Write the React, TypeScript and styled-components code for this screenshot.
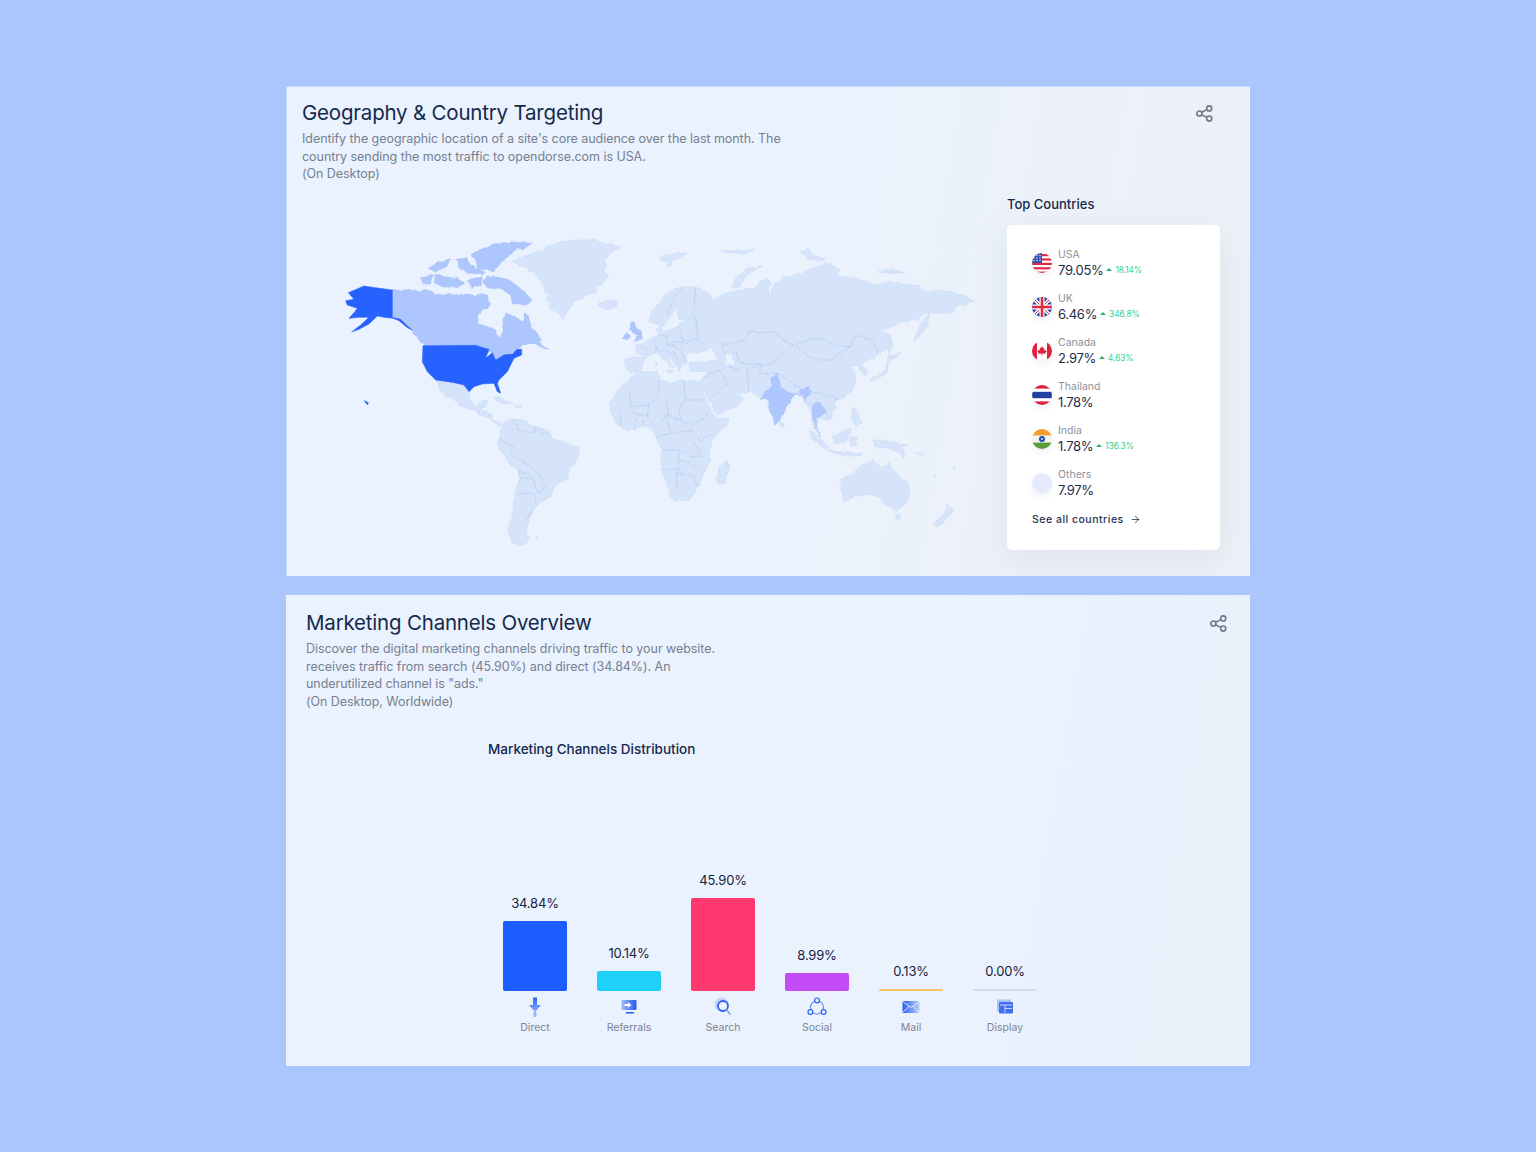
import React from "react";
import styled, { createGlobalStyle } from "styled-components";
import { ArrowRight } from "lucide-react";

const GlobalStyle = createGlobalStyle`
  html, body {
    margin: 0;
    padding: 0;
    background: #abc5fd;
  }
  body {
    font-family: "Inter", "Liberation Sans", sans-serif;
    color: #15294b;
  }
`;

const Page = styled.div`
  width: 964px;
  height: 1152px;
  margin: 0 auto;
  padding-top: 86px;
  box-sizing: border-box;
  display: flex;
  flex-direction: column;
  gap: 19px;
`;

const Card = styled.section<{ $height: number; $edge?: boolean }>`
  height: ${({ $height }) => $height}px;
  box-sizing: border-box;
  background: ${({ $edge }) =>
    $edge
      ? "linear-gradient(100deg, #e9f2fe 0%, #eaf2fe 50%, #edf1f7 85%)"
      : "linear-gradient(100deg, #e9f2fe 0%, #eaf2fe 60%, #ebf1fb 100%)"};
  box-shadow: ${({ $edge }) => ($edge ? "inset 1px 1px 0 #c6d8fe" : "none")};
  overflow: hidden;
`;

const CardHeader = styled.header<{ $left: number; $right: number; $top: number }>`
  display: flex;
  justify-content: space-between;
  align-items: flex-start;
  padding: ${({ $top }) => $top}px ${({ $right }) => $right}px 0 ${({ $left }) => $left}px;
`;

const Title = styled.h2`
  margin: 0 0 3px;
  font-size: 20.5px;
  line-height: 28px;
  font-weight: 400;
  letter-spacing: -0.2px;
  color: #15294b;
`;

const Description = styled.p`
  margin: 0;
  font-size: 12.5px;
  line-height: 17.6px;
  font-weight: 400;
  letter-spacing: -0.05px;
  color: #77808f;
`;

const ShareButton = styled.svg`
  display: block;
  margin: 6px 1px 0 0;
  fill: none;
  stroke: #6d7a8e;
  stroke-width: 1.7;
`;

const GeoBody = styled.div`
  display: flex;
  justify-content: space-between;
  align-items: flex-start;
  padding: 12px 30px 0 33px;
`;

const MapSvg = styled.svg`
  display: block;
  margin-top: 35px;
  flex: none;
`;

const Land = styled.path<{ $tone?: "base" | "mid" | "top" }>`
  fill: ${({ $tone }) =>
    $tone === "top" ? "#2762ff" : $tone === "mid" ? "#adc6fd" : "#d6e4fb"};
  stroke: ${({ $tone }) =>
    $tone === "top" ? "#2762ff" : $tone === "mid" ? "#a4bdf5" : "#c9d9f3"};
  stroke-width: 1.6;
  stroke-linejoin: round;
`;

const Border = styled.path`
  fill: none;
  stroke: #b4c6e6;
  stroke-width: 1.8;
  stroke-linejoin: round;
`;

const Water = styled.path`
  fill: #eaf2fe;
`;

const CountriesColumn = styled.aside`
  width: 213px;
  flex: none;
`;

const ColumnTitle = styled.h3`
  margin: 0 0 12px;
  font-size: 13px;
  line-height: 18px;
  font-weight: 500;
  color: #15294b;
`;

const CountriesCard = styled.div`
  height: 325px;
  box-sizing: border-box;
  padding: 16px 25px 0;
  background: #fff;
  border-radius: 5px;
  box-shadow: 0 10px 34px rgba(110, 130, 170, 0.12);
`;

const CountryRow = styled.div`
  display: flex;
  align-items: center;
  gap: 6px;
  height: 44px;
`;

const FlagSvg = styled.svg`
  flex: none;
  display: block;
  filter: drop-shadow(0 3px 3px rgba(120, 140, 180, 0.14));
`;

const CountryName = styled.div`
  font-size: 10.5px;
  line-height: 14px;
  color: #8b92a0;
`;

const CountryValue = styled.div`
  display: flex;
  align-items: center;
  font-size: 13px;
  line-height: 16px;
  letter-spacing: -0.3px;
  color: #1d2c47;
`;

const Delta = styled.span`
  display: flex;
  align-items: center;
  gap: 3px;
  margin-left: 3px;
  font-size: 8.4px;
  letter-spacing: -0.1px;
  color: #36d08f;
  &::before {
    content: "";
    border-left: 3px solid transparent;
    border-right: 3px solid transparent;
    border-bottom: 3px solid #27b377;
  }
`;

const SeeAll = styled.a`
  display: flex;
  align-items: center;
  gap: 6px;
  margin-top: 7px;
  font-size: 10.5px;
  line-height: 16px;
  font-weight: 500;
  letter-spacing: 0.5px;
  color: #1f3252;
`;

const ChartSection = styled.div`
  padding: 30px 0 0 202px;
`;

const ChartTitle = styled.h3`
  margin: 0;
  font-size: 13.5px;
  line-height: 18px;
  font-weight: 500;
  color: #15294b;
`;

const Chart = styled.div`
  display: flex;
  align-items: flex-end;
  height: 277px;
`;

const Column = styled.div`
  width: 94px;
  display: flex;
  flex-direction: column;
  align-items: center;
`;

const Value = styled.div`
  margin-bottom: 10px;
  font-size: 13px;
  line-height: 16px;
  letter-spacing: -0.2px;
  color: #17233c;
`;

const Bar = styled.div<{ $color: string }>`
  width: 64px;
  border-radius: 2px;
  background: ${({ $color }) => $color};
`;

const IconBox = styled.div`
  display: flex;
  align-items: center;
  justify-content: center;
  width: 20px;
  height: 20px;
  margin-top: 6px;
`;

const Label = styled.div`
  margin-top: 4px;
  font-size: 10.5px;
  line-height: 14px;
  color: #7d8594;
`;

const ShareIcon = () => (
  <ShareButton width="17" height="17" viewBox="0 0 18 18">
    <circle cx="3.6" cy="9" r="2.7" />
    <circle cx="14" cy="3.6" r="2.7" />
    <circle cx="14" cy="14.4" r="2.7" />
    <path d="M6 7.7 11.6 4.9M6 10.3 11.6 13.1" />
  </ShareButton>
);

const Flag = ({ id, children }: { id: string; children: React.ReactNode }) => (
  <FlagSvg width="20" height="20" viewBox="0 0 20 20">
    <defs>
      <clipPath id={`clip-${id}`}>
        <circle cx="10" cy="10" r="10" />
      </clipPath>
    </defs>
    <g clipPath={`url(#clip-${id})`}>{children}</g>
  </FlagSvg>
);

const flags: Record<string, React.ReactNode> = {
  usa: (
    <Flag id="usa">
      <rect width="20" height="20" fill="#fff" />
      {[0, 4.4, 8.8, 13.2, 17.6].map((y) => (
        <rect key={y} y={y + 1} width="20" height="2.2" fill="#dd2c42" />
      ))}
      <rect width="10" height="10" fill="#2d4fb0" />
      {[2, 5, 8].map((x) => (
        <g key={x} fill="#fff">
          <circle cx={x} cy="2.5" r=".7" />
          <circle cx={x} cy="5" r=".7" />
          <circle cx={x} cy="7.5" r=".7" />
        </g>
      ))}
    </Flag>
  ),
  uk: (
    <Flag id="uk">
      <rect width="20" height="20" fill="#2c4aa8" />
      <path d="M0 0 20 20M20 0 0 20" stroke="#fff" strokeWidth="3.4" />
      <path d="M0 0 20 20M20 0 0 20" stroke="#dd2c42" strokeWidth="1" />
      <path d="M10 0V20M0 10H20" stroke="#fff" strokeWidth="5" />
      <path d="M10 0V20M0 10H20" stroke="#dd2c42" strokeWidth="2.6" />
    </Flag>
  ),
  canada: (
    <Flag id="canada">
      <rect width="20" height="20" fill="#fff" />
      <rect width="5" height="20" fill="#dd2240" />
      <rect x="15" width="5" height="20" fill="#dd2240" />
      <path
        d="M10 5 11 7 12.3 6.5 11.8 9.3 13.3 8.6 13.8 10 15 10.2 13.4 11.8 13.7 12.8 10.4 12.5V14.5H9.6V12.5L6.3 12.8 6.6 11.8 5 10.2 6.2 10 6.7 8.6 8.2 9.3 7.7 6.5 9 7Z"
        fill="#dd2240"
      />
    </Flag>
  ),
  thailand: (
    <Flag id="thailand">
      <rect width="20" height="20" fill="#fff" />
      <rect width="20" height="3.6" fill="#d92240" />
      <rect y="16.4" width="20" height="3.6" fill="#d92240" />
      <rect y="6.8" width="20" height="6.4" fill="#23409f" />
    </Flag>
  ),
  india: (
    <Flag id="india">
      <rect width="20" height="20" fill="#f4f4f0" />
      <rect width="20" height="6.4" fill="#f59a2c" />
      <rect y="13.6" width="20" height="6.4" fill="#5d9c3d" />
      <circle cx="10" cy="10" r="3" fill="#1f4fa8" />
      <circle cx="10" cy="10" r="1" fill="#d6e4fb" />
    </Flag>
  ),
  others: (
    <Flag id="others">
      <rect width="20" height="20" fill="#e5ebfd" />
    </Flag>
  ),
};

const countries = [
  { key: "usa", name: "USA", value: "79.05%", delta: "18.14%" },
  { key: "uk", name: "UK", value: "6.46%", delta: "346.8%" },
  { key: "canada", name: "Canada", value: "2.97%", delta: "4.63%" },
  { key: "thailand", name: "Thailand", value: "1.78%" },
  { key: "india", name: "India", value: "1.78%", delta: "136.3%" },
  { key: "others", name: "Others", value: "7.97%" },
];

// outlines traced in 3x coordinates, one group per side of the map
const americasBase = [
  "M580,92 610,82 640,70 670,62 700,45 750,30 800,30 830,28 850,42 880,42 905,52 885,62 870,75 858,90 862,110 852,118 870,140 850,150 850,165 828,170 830,185 805,195 790,205 770,212 760,225 745,240 735,265 718,252 710,245 695,238 690,225 682,205 695,195 682,190 672,172 670,160 655,140 640,125 620,112 600,110Z",
  "M838,218 860,212 890,212 895,225 870,238 848,232Z",
  "M350,450 385,455 405,458 435,465 450,485 455,515 470,530 490,512 505,512 495,530 482,545 505,545 525,570 550,585 540,590 510,565 470,545 420,525 385,495 360,465Z",
  "M352,452 362,470 385,502 378,500 358,472Z",
  "M520,503 545,505 580,522 555,518 530,510Z",
  "M590,525 612,528 605,535 590,532Z",
  "M550,585 565,570 580,565 600,568 620,570 635,585 650,590 670,595 690,600 700,625 735,635 780,655 775,690 752,715 750,745 725,755 710,765 695,800 670,815 650,830 640,850 630,875 622,900 628,925 620,945 600,950 580,935 570,905 572,880 582,840 590,790 598,745 600,720 578,705 560,680 540,655 535,640 545,615Z",
  "M650,922 660,922 656,928Z",
];

const americasMid = [
  "M210,182 255,180 290,178 300,185 320,178 345,190 370,195 395,190 420,197 445,192 470,197 478,190 505,195 512,225 505,235 490,240 470,262 480,282 505,290 530,298 540,325 552,310 552,285 560,250 590,262 610,276 620,250 630,268 640,298 668,325 660,338 688,358 660,352 640,340 610,345 595,358 575,370 555,380 530,388 520,368 500,365 470,355 320,355 290,318 280,300 262,285 245,268 210,255Z",
  "M458,72 495,55 520,42 580,36 640,40 615,55 590,58 575,75 560,85 540,105 525,128 505,118 480,115 470,95Z",
  "M492,152 505,142 540,140 570,150 600,172 640,210 620,225 600,218 580,218 575,195 545,175 505,175Z",
  "M345,132 375,140 415,145 440,160 410,172 370,170 350,160Z",
  "M305,140 340,135 335,165 310,160Z",
  "M325,118 360,95 392,90 385,108 350,125Z",
  "M410,88 440,85 455,105 500,128 490,135 450,128 425,115Z",
  "M445,150 490,140 485,165 460,175Z",
  "M610,335 645,322 640,335 620,345Z",
];

const asiaBase = [
  // Asia mainland
  "M285,250 285,225 310,215 345,208 365,195 385,188 400,185 440,178 470,172 480,155 505,148 515,160 505,205 520,180 525,160 548,152 550,140 590,135 610,130 640,115 680,100 710,108 722,120 715,135 750,140 780,148 805,158 830,165 870,155 920,160 965,172 975,185 1015,180 1060,185 1090,195 1125,212 1105,222 1085,225 1062,238 1070,245 1040,250 1000,250 975,250 960,268 940,270 900,280 865,295 840,305 860,310 875,315 880,345 870,355 835,375 825,385 815,385 790,400 800,415 808,430 795,437 782,420 778,405 755,412 768,430 770,455 760,480 730,505 705,515 710,530 700,545 695,565 680,572 665,560 655,575 650,590 665,620 650,605 640,590 638,555 625,520 612,510 600,490 590,490 570,515 545,570 530,582 512,540 505,510 488,505 450,485 420,490 405,482 385,462 410,490 440,505 420,525 400,535 355,555 340,530 325,500 308,460 310,445 325,425 275,425 265,400 290,395 340,395 355,385 345,365 340,355 300,330 270,300Z",
  // Continental Europe
  "M112,345 135,340 160,320 178,318 172,298 185,285 190,305 215,298 240,288 285,250 300,330 335,350 320,362 300,368 268,370 262,385 265,400 250,405 245,425 235,415 225,390 200,375 215,395 225,412 210,405 190,382 180,368 160,372 145,380 120,372 110,365Z",
  "M78,388 100,382 145,382 135,400 125,425 88,425 80,412Z",
  "M150,275 158,245 175,225 205,190 230,175 255,170 290,172 320,185 340,205 310,215 285,225 280,262 255,268 240,268 232,235 220,250 205,270 190,290 165,280Z",
  "M170,395 178,395 176,410 170,408Z",
  "M205,418 222,422 212,432Z",
  // Africa
  "M35,512 48,498 60,480 75,460 90,445 110,432 130,425 155,425 175,425 180,455 200,452 220,460 240,450 255,450 305,455 320,510 332,530 345,555 360,568 395,565 382,585 370,600 340,625 332,650 335,690 320,720 305,750 290,785 275,805 250,812 225,815 212,790 205,770 190,730 185,700 190,660 178,640 170,620 155,595 135,585 110,598 85,600 65,590 50,575 35,545Z",
  "M355,750 360,710 385,692 390,715 378,758 362,762Z",
  "M540,578 555,582 555,592 545,592Z",
  // Australia and the islands
  "M722,750 745,740 765,725 790,705 805,700 825,690 840,710 858,712 870,695 885,725 900,740 925,755 935,770 930,795 925,815 905,835 890,840 860,825 840,800 815,795 790,795 770,800 735,815 730,790Z",
  "M885,850 905,852 900,868 890,866Z",
  "M1003,880 1040,855 1042,822 1065,835 1050,860 1015,892Z",
  "M630,600 660,620 690,655 670,650 640,625Z",
  "M680,660 740,668 790,672 780,680 700,670Z",
  "M700,620 720,612 735,600 755,595 745,630 710,645Z",
  "M755,620 780,622 768,632 775,650 755,650Z",
  "M820,630 870,635 890,640 930,645 912,650 915,680 870,655 830,650Z",
  "M760,530 775,550 790,580 770,590 755,555Z",
  "M810,450 860,420 870,380 905,370 870,395 862,430 815,455Z",
  "M872,312 882,340 872,375 868,345Z",
  "M945,335 965,280 992,250 985,290 960,320Z",
  "M400,172 412,140 450,115 490,108 440,135 420,172Z",
  "M182,80 210,72 265,70 240,85 220,92 215,110 195,95Z",
  "M365,65 420,60 465,60 420,72Z",
  "M605,65 625,58 655,80 680,90 650,95 625,85Z",
  "M838,122 880,118 920,128 870,132Z",
  "M0,215 30,212 55,222 25,238 5,232Z",
  "M1000,735 1005,730 1008,745Z",
  "M1058,715 1070,712 1066,722Z",
  "M950,665 975,672 960,672Z",
];

const asiaMid = [
  "M95,280 105,275 112,295 122,300 133,325 105,335 115,320 95,300Z",
  "M70,325 85,305 95,320 80,328Z",
  "M535,432 545,470 575,490 610,495 590,490 570,515 545,570 530,582 512,540 505,510 488,505 495,490 520,470 515,445Z",
  "M600,485 632,468 635,490 615,510 612,498Z",
  "M640,525 665,518 682,545 665,558 650,560 650,590 665,620 648,592 640,555Z",
];

const asiaBorders = [
  // Asia
  "M370,345 400,340 440,330 450,305 500,305 535,310 555,335 580,345",
  "M590,345 640,325 680,330 700,345 755,350 735,362 720,375 690,392 640,385 610,368 590,345",
  "M755,350 770,315 810,325 830,350 835,370",
  "M370,345 378,372 410,368 430,400 490,405 520,400 545,375 580,345",
  "M430,400 445,420 450,485",
  "M490,405 480,430 520,430 535,432",
  "M535,432 610,478 680,495 720,510",
  "M615,510 640,525 682,545 690,570",
  "M345,425 360,420 385,462",
  "M385,462 330,510",
  "M310,445 345,425",
  "M285,250 300,330",
  "M445,420 490,405",
  "M360,400 420,420",
  // Europe
  "M165,325 170,360 215,365",
  "M200,310 205,350 250,355",
  "M240,288 250,330 300,330",
  "M215,335 270,338",
  "M225,365 240,405",
  "M245,365 262,395",
  "M250,172 225,205 205,260",
  "M290,172 285,225",
  "M178,318 215,315",
  "M125,345 145,360",
  "M205,340 225,350",
  // Africa
  "M92,490 100,530 150,525",
  "M180,455 180,490 150,525",
  "M255,450 258,510 320,510",
  "M208,505 205,550 250,580",
  "M150,525 145,560 170,590 205,550",
  "M90,545 145,560",
  "M258,510 240,545 250,580 305,575",
  "M305,575 330,545",
  "M170,620 215,610 280,600",
  "M190,660 240,660 240,720 185,718",
  "M240,660 275,680 310,680",
  "M232,780 232,725 285,740 300,770",
  "M280,600 305,635 335,610",
  "M285,640 310,680",
  "M60,550 70,590",
  "M110,565 108,598",
  "M130,570 132,592",
  "M205,550 215,610",
  "M240,690 275,700 300,720",
];

const americasBorders = [
  "M482,545 500,530",
  "M510,565 520,550",
  "M580,565 600,600 640,610 650,590",
  "M660,590 665,612 690,610",
  "M540,625 580,650 580,680 605,690 650,720 680,770 660,790 640,745 600,720",
  "M600,720 605,745 640,745",
  "M598,790 640,790 660,830",
  "M625,870 640,830",
];

const WorldMap = () => (
  <MapSvg width="670" height="330" viewBox="320 230 670 330">
    <defs>
      {/* roughens the traced outlines into something like a coastline */}
      <filter id="coast" filterUnits="userSpaceOnUse" x="320" y="230" width="670" height="330">
        <feTurbulence type="fractalNoise" baseFrequency="0.14" numOctaves="2" seed="4" result="noise" />
        <feDisplacementMap in="SourceGraphic" in2="noise" scale="4" xChannelSelector="R" yChannelSelector="G" />
      </filter>
    </defs>
    <g filter="url(#coast)">
      <g transform="translate(320 230) scale(0.3333)">
        {americasBase.map((d) => (
          <Land key={d} d={d} />
        ))}
        {americasMid.map((d) => (
          <Land key={d} d={d} $tone="mid" />
        ))}
        {americasBorders.map((d) => (
          <Border key={d} d={d} />
        ))}
      </g>
      <g transform="translate(600 230) scale(0.3333)">
        {asiaBase.map((d) => (
          <Land key={d} d={d} />
        ))}
        <Water d="M380,370 395,365 405,405 385,410Z" />
        <Water d="M270,372 335,378 320,392 270,392Z" />
        {asiaBorders.map((d) => (
          <Border key={d} d={d} />
        ))}
        {asiaMid.map((d) => (
          <Land key={d} d={d} $tone="mid" />
        ))}
      </g>
    </g>
    <g transform="translate(320 230) scale(0.3333)">
      <Land
        $tone="top"
        d="M88,188 135,168 160,172 220,180 220,262 245,268 262,285 280,300 268,295 255,285 240,272 222,265 195,262 175,258 150,282 120,298 98,306 125,285 150,262 120,262 90,265 105,248 115,235 85,225 80,212 105,208Z"
      />
      <Land
        $tone="top"
        d="M312,347 470,346 488,352 510,358 500,385 520,368 530,390 555,375 580,372 595,358 608,358 608,375 585,385 575,405 565,425 540,450 535,460 545,490 535,485 525,460 490,462 465,470 450,485 435,465 405,458 385,455 350,450 325,425 310,395Z"
      />
      <Land $tone="top" d="M136,512 148,518 146,524 141,520Z" />
    </g>
  </MapSvg>
);

const DirectIcon = () => (
  <svg width="20" height="20" viewBox="0 0 20 20">
    <defs>
      <linearGradient id="directFill" x1="0" y1="0" x2="0" y2="1">
        <stop offset="0" stopColor="#2f66f5" />
        <stop offset="1" stopColor="#a6c2fb" />
      </linearGradient>
    </defs>
    <path d="M8 0.5H12V8H16L10 15 4 8H8Z M8.5 15H11.5V20H8.5Z" fill="url(#directFill)" />
  </svg>
);

const ReferralsIcon = () => (
  <svg width="20" height="20" viewBox="0 0 20 20">
    <defs>
      <linearGradient id="referralFill" x1="0" y1="0" x2="1" y2="0">
        <stop offset="0" stopColor="#9dbdfb" />
        <stop offset="1" stopColor="#2558ee" />
      </linearGradient>
    </defs>
    <rect x="2.5" y="3" width="15" height="10" rx="1" fill="url(#referralFill)" />
    <path d="M5.5 7H9V5.2L12.5 8 9 10.8V9H5.5Z" fill="#fff" />
    <rect x="7" y="15" width="8" height="1.6" fill="#2f62ee" />
  </svg>
);

const SearchIcon = () => (
  <svg width="20" height="20" viewBox="0 0 20 20">
    <circle cx="8.5" cy="7.5" r="7" fill="#c3d5fc" />
    <circle cx="10" cy="9" r="5" fill="#eaf2fe" stroke="#2f62ee" strokeWidth="1.8" />
    <path d="M13.8 13 17 17" stroke="#8da6d8" strokeWidth="1.8" strokeLinecap="round" />
  </svg>
);

const SocialIcon = () => (
  <svg width="20" height="20" viewBox="0 0 20 20" fill="none">
    <circle cx="10" cy="10.5" r="6.6" stroke="#6f95f0" strokeWidth="1.2" />
    <circle cx="10" cy="3.4" r="2.4" fill="#eaf2fe" stroke="#2f62ee" strokeWidth="1.2" />
    <circle cx="3.4" cy="15" r="2.4" fill="#eaf2fe" stroke="#2f62ee" strokeWidth="1.2" />
    <circle cx="16.6" cy="15" r="2.4" fill="#eaf2fe" stroke="#2f62ee" strokeWidth="1.2" />
  </svg>
);

const MailIcon = () => (
  <svg width="20" height="20" viewBox="0 0 20 20">
    <defs>
      <linearGradient id="mailFill" x1="0" y1="0" x2="1" y2="0">
        <stop offset="0" stopColor="#2a5cf0" />
        <stop offset="1" stopColor="#b9cffb" />
      </linearGradient>
    </defs>
    <rect x="1.5" y="4" width="17" height="12" fill="url(#mailFill)" />
    <path d="M1.5 4.5 10 10.5 18.5 4.5M1.5 15.5 8 9.5M18.5 15.5 12 9.5" fill="none" stroke="#eaf2fe" strokeWidth="0.9" />
  </svg>
);

const DisplayIcon = () => (
  <svg width="20" height="20" viewBox="0 0 20 20">
    <rect x="2" y="2.5" width="14" height="12" fill="#a9c3fb" />
    <rect x="4" y="5" width="14" height="11.5" rx="1" fill="#3f6ff0" />
    <path d="M5 8H17M10 8V15.5M10 11.5H17" stroke="#d3e0fc" strokeWidth="0.9" />
  </svg>
);

const channels = [
  { name: "Direct", share: 34.84, color: "#1d5cff", icon: <DirectIcon /> },
  { name: "Referrals", share: 10.14, color: "#1fd0f8", icon: <ReferralsIcon /> },
  { name: "Search", share: 45.9, color: "#ff3870", icon: <SearchIcon /> },
  { name: "Social", share: 8.99, color: "#c44cf6", icon: <SocialIcon /> },
  { name: "Mail", share: 0.13, color: "#f5c566", icon: <MailIcon /> },
  { name: "Display", share: 0, color: "#d5dde9", icon: <DisplayIcon /> },
];

export default function App() {
  return (
    <>
      <GlobalStyle />
      <Page>
        <Card $height={490} $edge>
          <CardHeader $left={16} $right={36} $top={13}>
            <div>
              <Title>Geography &amp; Country Targeting</Title>
              <Description>
                Identify the geographic location of a site's core audience over the last month. The
                <br />
                country sending the most traffic to opendorse.com is USA.
                <br />
                (On Desktop)
              </Description>
            </div>
            <ShareIcon />
          </CardHeader>
          <GeoBody>
            <WorldMap />
            <CountriesColumn>
              <ColumnTitle>Top Countries</ColumnTitle>
              <CountriesCard>
                {countries.map((c) => (
                  <CountryRow key={c.key}>
                    {flags[c.key]}
                    <div>
                      <CountryName>{c.name}</CountryName>
                      <CountryValue>
                        {c.value}
                        {c.delta && <Delta>{c.delta}</Delta>}
                      </CountryValue>
                    </div>
                  </CountryRow>
                ))}
                <SeeAll>
                  See all countries <ArrowRight size={11} strokeWidth={1.8} />
                </SeeAll>
              </CountriesCard>
            </CountriesColumn>
          </GeoBody>
        </Card>
        <Card $height={471}>
          <CardHeader $left={20} $right={22} $top={14}>
            <div>
              <Title>Marketing Channels Overview</Title>
              <Description>
                Discover the digital marketing channels driving traffic to your website.
                <br />
                receives traffic from search (45.90%) and direct (34.84%). An
                <br />
                underutilized channel is "ads."
                <br />
                (On Desktop, Worldwide)
              </Description>
            </div>
            <ShareIcon />
          </CardHeader>
          <ChartSection>
            <ChartTitle>Marketing Channels Distribution</ChartTitle>
            <Chart>
              {channels.map((c) => (
                <Column key={c.name}>
                  <Value>{c.share.toFixed(2)}%</Value>
                  <Bar $color={c.color} style={{ height: Math.max(2, c.share * 2.03) }} />
                  <IconBox>{c.icon}</IconBox>
                  <Label>{c.name}</Label>
                </Column>
              ))}
            </Chart>
          </ChartSection>
        </Card>
      </Page>
    </>
  );
}
